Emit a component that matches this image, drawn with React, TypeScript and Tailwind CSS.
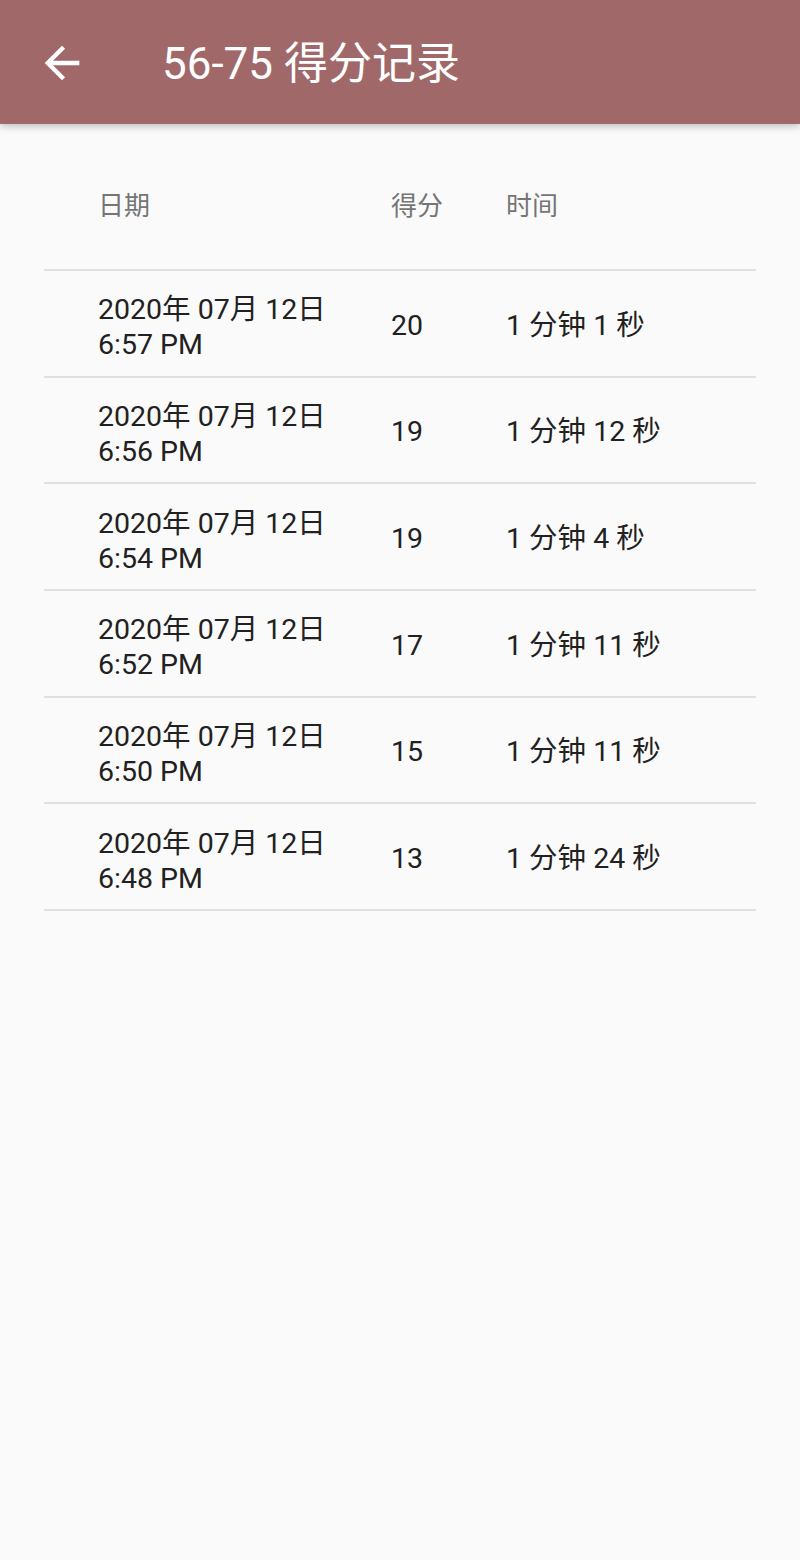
import React from "react";

const rows = [
  { d: "2020年 07月 12日", t: "6:57 PM", s: "20", time: "1 分钟 1 秒" },
  { d: "2020年 07月 12日", t: "6:56 PM", s: "19", time: "1 分钟 12 秒" },
  { d: "2020年 07月 12日", t: "6:54 PM", s: "19", time: "1 分钟 4 秒" },
  { d: "2020年 07月 12日", t: "6:52 PM", s: "17", time: "1 分钟 11 秒" },
  { d: "2020年 07月 12日", t: "6:50 PM", s: "15", time: "1 分钟 11 秒" },
  { d: "2020年 07月 12日", t: "6:48 PM", s: "13", time: "1 分钟 24 秒" },
];

export default function App() {
  return (
    <div
      className="w-[800px] h-[1560px] bg-[#fafafa] overflow-hidden"
      style={{ fontFamily: 'Roboto, "Noto Sans CJK SC", sans-serif' }}
    >
      <div className="relative z-10 h-[124px] bg-[#a1686a] flex items-center shadow-[0_2px_8px_rgba(0,0,0,0.25)]">
        <div className="ml-[36px] w-[52px] h-[52px] mt-[2px]">
          <svg viewBox="0 0 24 24" width="52" height="52" fill="#ffffff">
            <path d="M20 11H7.83l5.59-5.59L12 4l-8 8 8 8 1.41-1.41L7.83 13H20v-2z" />
          </svg>
        </div>
        <div className="ml-[74px] mt-[4px] text-white text-[44px] leading-[48px]">56-75 得分记录</div>
      </div>
      <div className="mx-[44px]">
        <div className="h-[147px] border-b-2 border-[#e0e0e0] flex pt-[64px] text-[26px] leading-[36px] text-[#757575]">
          <div className="pl-[54px] w-[347px]">日期</div>
          <div className="w-[115px]">得分</div>
          <div className="flex-1">时间</div>
        </div>
        {rows.map((r, i) => (
          <div
            key={i}
            className="h-[106.67px] border-b-2 border-[#e0e0e0] flex items-center text-[28.5px] text-[#212121] pt-[5px]"
          >
            <div className="pl-[54px] w-[347px] leading-[35px] pt-[3px]">
              <div>{r.d}</div>
              <div>{r.t}</div>
            </div>
            <div className="w-[115px] leading-[36px]">{r.s}</div>
            <div className="flex-1 leading-[36px]">{r.time}</div>
          </div>
        ))}
      </div>
    </div>
  );
}
